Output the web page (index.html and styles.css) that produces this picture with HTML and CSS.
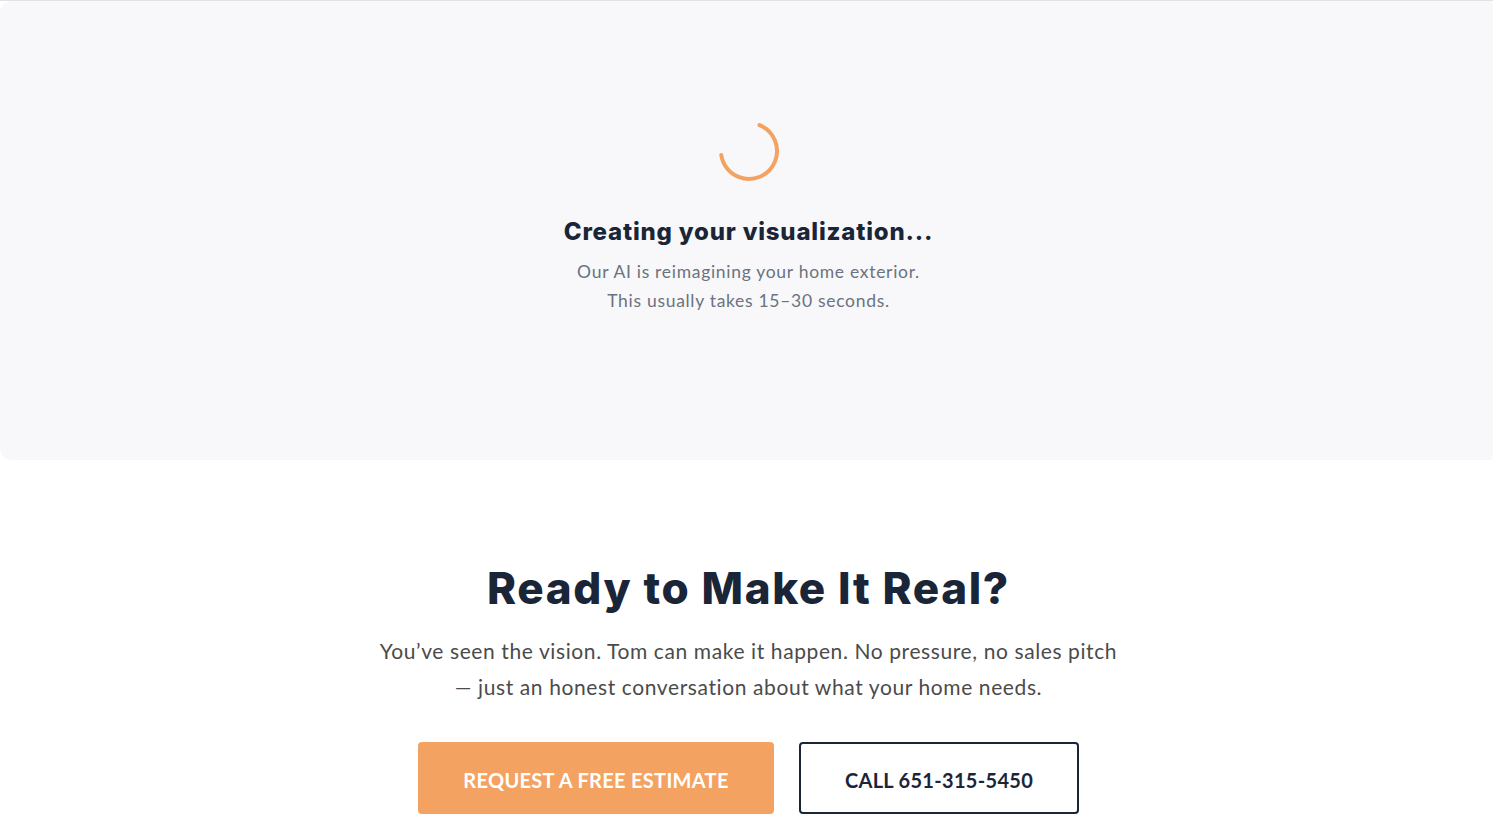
FILE: index.html
```html
<!DOCTYPE html>
<html lang="en">
<head>
<meta charset="utf-8">
<title>Creating your visualization</title>
<link rel="stylesheet" href="styles.css">
</head>
<body>
<div class="topline"></div>
<section class="loading-card">
  <svg class="spinner" width="64" height="64" viewBox="0 0 64 64" aria-hidden="true">
    <circle cx="32" cy="32" r="28" fill="none" stroke="#f4a261" stroke-width="4" stroke-linecap="round" stroke-dasharray="117 200" transform="rotate(-68 32 32)"/>
  </svg>
  <h2 class="loading-title">Creating your visualization...</h2>
  <p class="loading-text">Our AI is reimagining your home exterior.<br>This usually takes 15–30 seconds.</p>
</section>
<section class="cta">
  <h1 class="cta-title">Ready to Make It Real?</h1>
  <p class="cta-text">You’ve seen the vision. Tom can make it happen. No pressure, no sales pitch — just an honest conversation about what your home needs.</p>
  <div class="cta-buttons">
    <a class="btn btn-primary" href="#">Request a Free Estimate</a>
    <a class="btn btn-outline" href="#">Call 651-315-5450</a>
  </div>
</section>
</body>
</html>
```
FILE: styles.css
```css
html, body {
  margin: 0;
  padding: 0;
  background: #ffffff;
  overflow: hidden;
}
body {
  font-family: "Lato", "Open Sans", sans-serif;
  color: #1b2538;
}
.topline {
  height: 1px;
  background: #e2e2e2;
}
.loading-card {
  background: #f8f8fa;
  height: 459px;
  border-radius: 12px 4px 4px 12px;
  display: flex;
  flex-direction: column;
  align-items: center;
  box-sizing: border-box;
  padding-top: 118px;
  padding-left: 4px;
}
.spinner {
  display: block;
  margin-left: 1px;
}
.loading-title {
  font-family: "Inter", "Noto Sans", sans-serif;
  font-weight: 800;
  font-size: 24px;
  line-height: 32px;
  color: #1b2538;
  margin: 33px 0 0 0;
  letter-spacing: 0.8px;
}
.loading-text {
  margin: 9px 0 0 0;
  font-size: 17.5px;
  line-height: 29px;
  color: #6b7280;
  text-align: center;
  letter-spacing: 0.7px;
}
.cta {
  display: flex;
  flex-direction: column;
  align-items: center;
  padding-top: 100px;
  padding-left: 4px;
}
.cta-title {
  font-family: "Inter", "Noto Sans", sans-serif;
  font-weight: 800;
  font-size: 44px;
  line-height: 56px;
  margin: 0;
  color: #1b2538;
  letter-spacing: 1.6px;
}
.cta-text {
  margin: 17px 0 0 0;
  max-width: 745px;
  text-align: center;
  font-size: 21px;
  line-height: 36px;
  color: #4b4b4b;
  letter-spacing: 0.6px;
}
.cta-buttons {
  display: flex;
  gap: 25px;
  margin-top: 37px;
}
.btn {
  display: flex;
  align-items: center;
  justify-content: center;
  height: 72px;
  box-sizing: border-box;
  padding-top: 4px;
  border-radius: 4px;
  text-decoration: none;
  text-transform: uppercase;
  font-weight: 700;
  font-size: 20px;
  letter-spacing: 0.3px;
}
.btn-primary {
  width: 356px;
  background: #f4a261;
  color: #ffffff;
}
.btn-outline {
  width: 280px;
  border: 2px solid #1b2538;
  color: #1b2538;
  background: #ffffff;
}
```
